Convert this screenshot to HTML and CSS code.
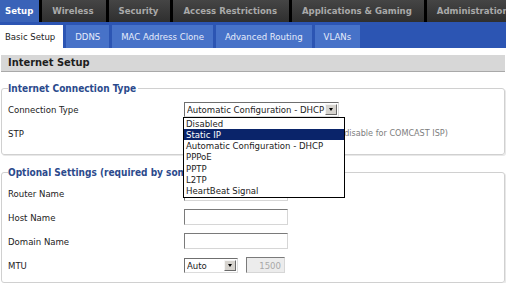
FILE: index.html
```html
<!DOCTYPE html>
<html lang="en">
<head>
    <meta charset="UTF-8">
    <title>Basic Setup</title>
    <link rel="stylesheet" href="styles.css">
</head>
<body>
    <div class="topnav">
        <span class="tab active">Setup</span>
        <span class="tab">Wireless</span>
        <span class="tab">Security</span>
        <span class="tab">Access Restrictions</span>
        <span class="tab">Applications &amp; Gaming</span>
        <span class="tab">Administration</span>
    </div>
    <div class="subnav">
        <span class="subtab active">Basic Setup</span>
        <span class="subtab">DDNS</span>
        <span class="subtab">MAC Address Clone</span>
        <span class="subtab">Advanced Routing</span>
        <span class="subtab">VLANs</span>
    </div>

    <div class="content">
        <h2 class="section-title">Internet Setup</h2>

        <fieldset class="group first">
            <legend>Internet Connection Type</legend>
            <div class="row">
                <label>Connection Type</label>
                <div class="select wide">
                    <span class="select-value">Automatic Configuration - DHCP</span>
                    <span class="select-btn"></span>
                    <ul class="select-list">
                        <li>Disabled</li>
                        <li class="selected">Static IP</li>
                        <li>Automatic Configuration - DHCP</li>
                        <li>PPPoE</li>
                        <li>PPTP</li>
                        <li>L2TP</li>
                        <li>HeartBeat Signal</li>
                    </ul>
                </div>
            </div>
            <div class="row">
                <label>STP</label>
                <div class="select wide">
                    <span class="select-value">Disabled</span>
                    <span class="select-btn"></span>
                </div>
                <span class="hint">(disable for COMCAST ISP)</span>
            </div>
        </fieldset>

        <fieldset class="group second">
            <legend>Optional Settings (required by some ISPs)</legend>
            <div class="row">
                <label>Router Name</label>
                <input class="text" type="text">
            </div>
            <div class="row">
                <label>Host Name</label>
                <input class="text" type="text">
            </div>
            <div class="row">
                <label>Domain Name</label>
                <input class="text" type="text">
            </div>
            <div class="row">
                <label>MTU</label>
                <div class="select small">
                    <span class="select-value">Auto</span>
                    <span class="select-btn"></span>
                </div>
                <input class="text num" type="text" value="1500" disabled>
            </div>
        </fieldset>
    </div>
</body>
</html>
```

FILE: styles.css
```css
body {
    margin: 0;
    width: 506px;
    overflow: hidden;
    font-family: "DejaVu Sans Condensed", "DejaVu Sans", sans-serif;
    font-stretch: condensed;
    font-size: 9.5px;
    color: #222;
    background: #fff;
}

/* top tabs */
.topnav {
    display: flex;
    gap: 3px;
    height: 22px;
    background: #000;
    white-space: nowrap;
    overflow: hidden;
}
.tab {
    flex: none;
    padding: 0 12px 0 10px;
    line-height: 22px;
    background: linear-gradient(#454545, #2f2f2f);
    color: #a9a9a9;
    font-weight: bold;
}
.tab.active {
    padding: 0 6px 0 5px;
    background: #3a63b8;
    color: #fff;
}

/* second row */
.subnav {
    display: flex;
    align-items: flex-end;
    gap: 3px;
    height: 26px;
    background: #2c55b3;
    white-space: nowrap;
}
.subtab {
    height: 23px;
    line-height: 23px;
    padding: 0 9px;
    background: #4772c8;
    color: #e6ecfb;
}
.subtab.active {
    padding: 0 8px 0 5px;
    background: #fff;
    color: #222;
}

.content {
    padding: 7px 1px 0 1px;
}

.section-title {
    margin: 0;
    height: 16px;
    line-height: 16px;
    padding-left: 7px;
    background: #d7d7d7;
    border-bottom: 1px solid #a9a9a9;
    font-size: 11px;
    color: #1e1e1e;
}

.group {
    margin: 0;
    padding: 0 6px 9px 6px;
    border: 1px solid #d0d0d0;
    border-radius: 3px;
    box-shadow: 1px 1px 0 #e8e8e8;
}
.group.first {
    margin-top: 10px;
}
.group.second {
    margin-top: 11px;
    padding-bottom: 5px;
}
.group legend {
    padding: 0 2px 0 0;
    line-height: 13px;
    font-size: 10px;
    font-weight: bold;
    color: #2b4a8c;
}

.row {
    display: flex;
    align-items: center;
    height: 24px;
}
.row:first-of-type {
    margin-top: 2px;
}
.row label {
    flex: none;
    width: 176px;
}

/* windows style select */
.select {
    position: relative;
    display: flex;
    align-items: center;
    box-sizing: border-box;
    height: 15px;
    padding-left: 2px;
    border: 1px solid;
    border-color: #6f6f6f #dcdcdc #dcdcdc #6f6f6f;
    background: #fff;
}
.select.wide {
    width: 155px;
}
.select.small {
    width: 54px;
}
.select-value {
    flex: 1;
    white-space: nowrap;
    overflow: hidden;
}
.select-btn {
    position: relative;
    box-sizing: border-box;
    width: 12px;
    height: 11px;
    margin-right: 1px;
    border: 1px solid;
    border-color: #f4f4f4 #6a6a6a #6a6a6a #f4f4f4;
    background: #d6d3ce;
}
.select-btn::after {
    content: "";
    position: absolute;
    left: 3px;
    top: 3px;
    border-left: 2px solid transparent;
    border-right: 2px solid transparent;
    border-top: 3px solid #000;
}

.select-list {
    position: absolute;
    z-index: 5;
    top: 14px;
    left: -2px;
    width: 162px;
    box-sizing: border-box;
    margin: 0;
    padding: 0;
    list-style: none;
    border: 1px solid #000;
    background: #fff;
}
.select-list li {
    height: 11.3px;
    line-height: 11.3px;
    padding-left: 2px;
    white-space: nowrap;
}
.select-list li.selected {
    background: #0a246a;
    color: #fff;
}

.hint {
    margin-left: 2px;
    font-size: 9px;
    color: #7d7d7d;
    white-space: nowrap;
}

.text {
    box-sizing: border-box;
    width: 104px;
    height: 16px;
    margin: 0;
    padding: 0 3px;
    border: 1px solid;
    border-color: #7a7a7a #d6d6d6 #d6d6d6 #7a7a7a;
    font: inherit;
    background: #fff;
}
.text.num {
    width: 39px;
    margin-left: 8px;
    text-align: right;
    color: #a8a8a8;
    background: #ececec;
}
```
